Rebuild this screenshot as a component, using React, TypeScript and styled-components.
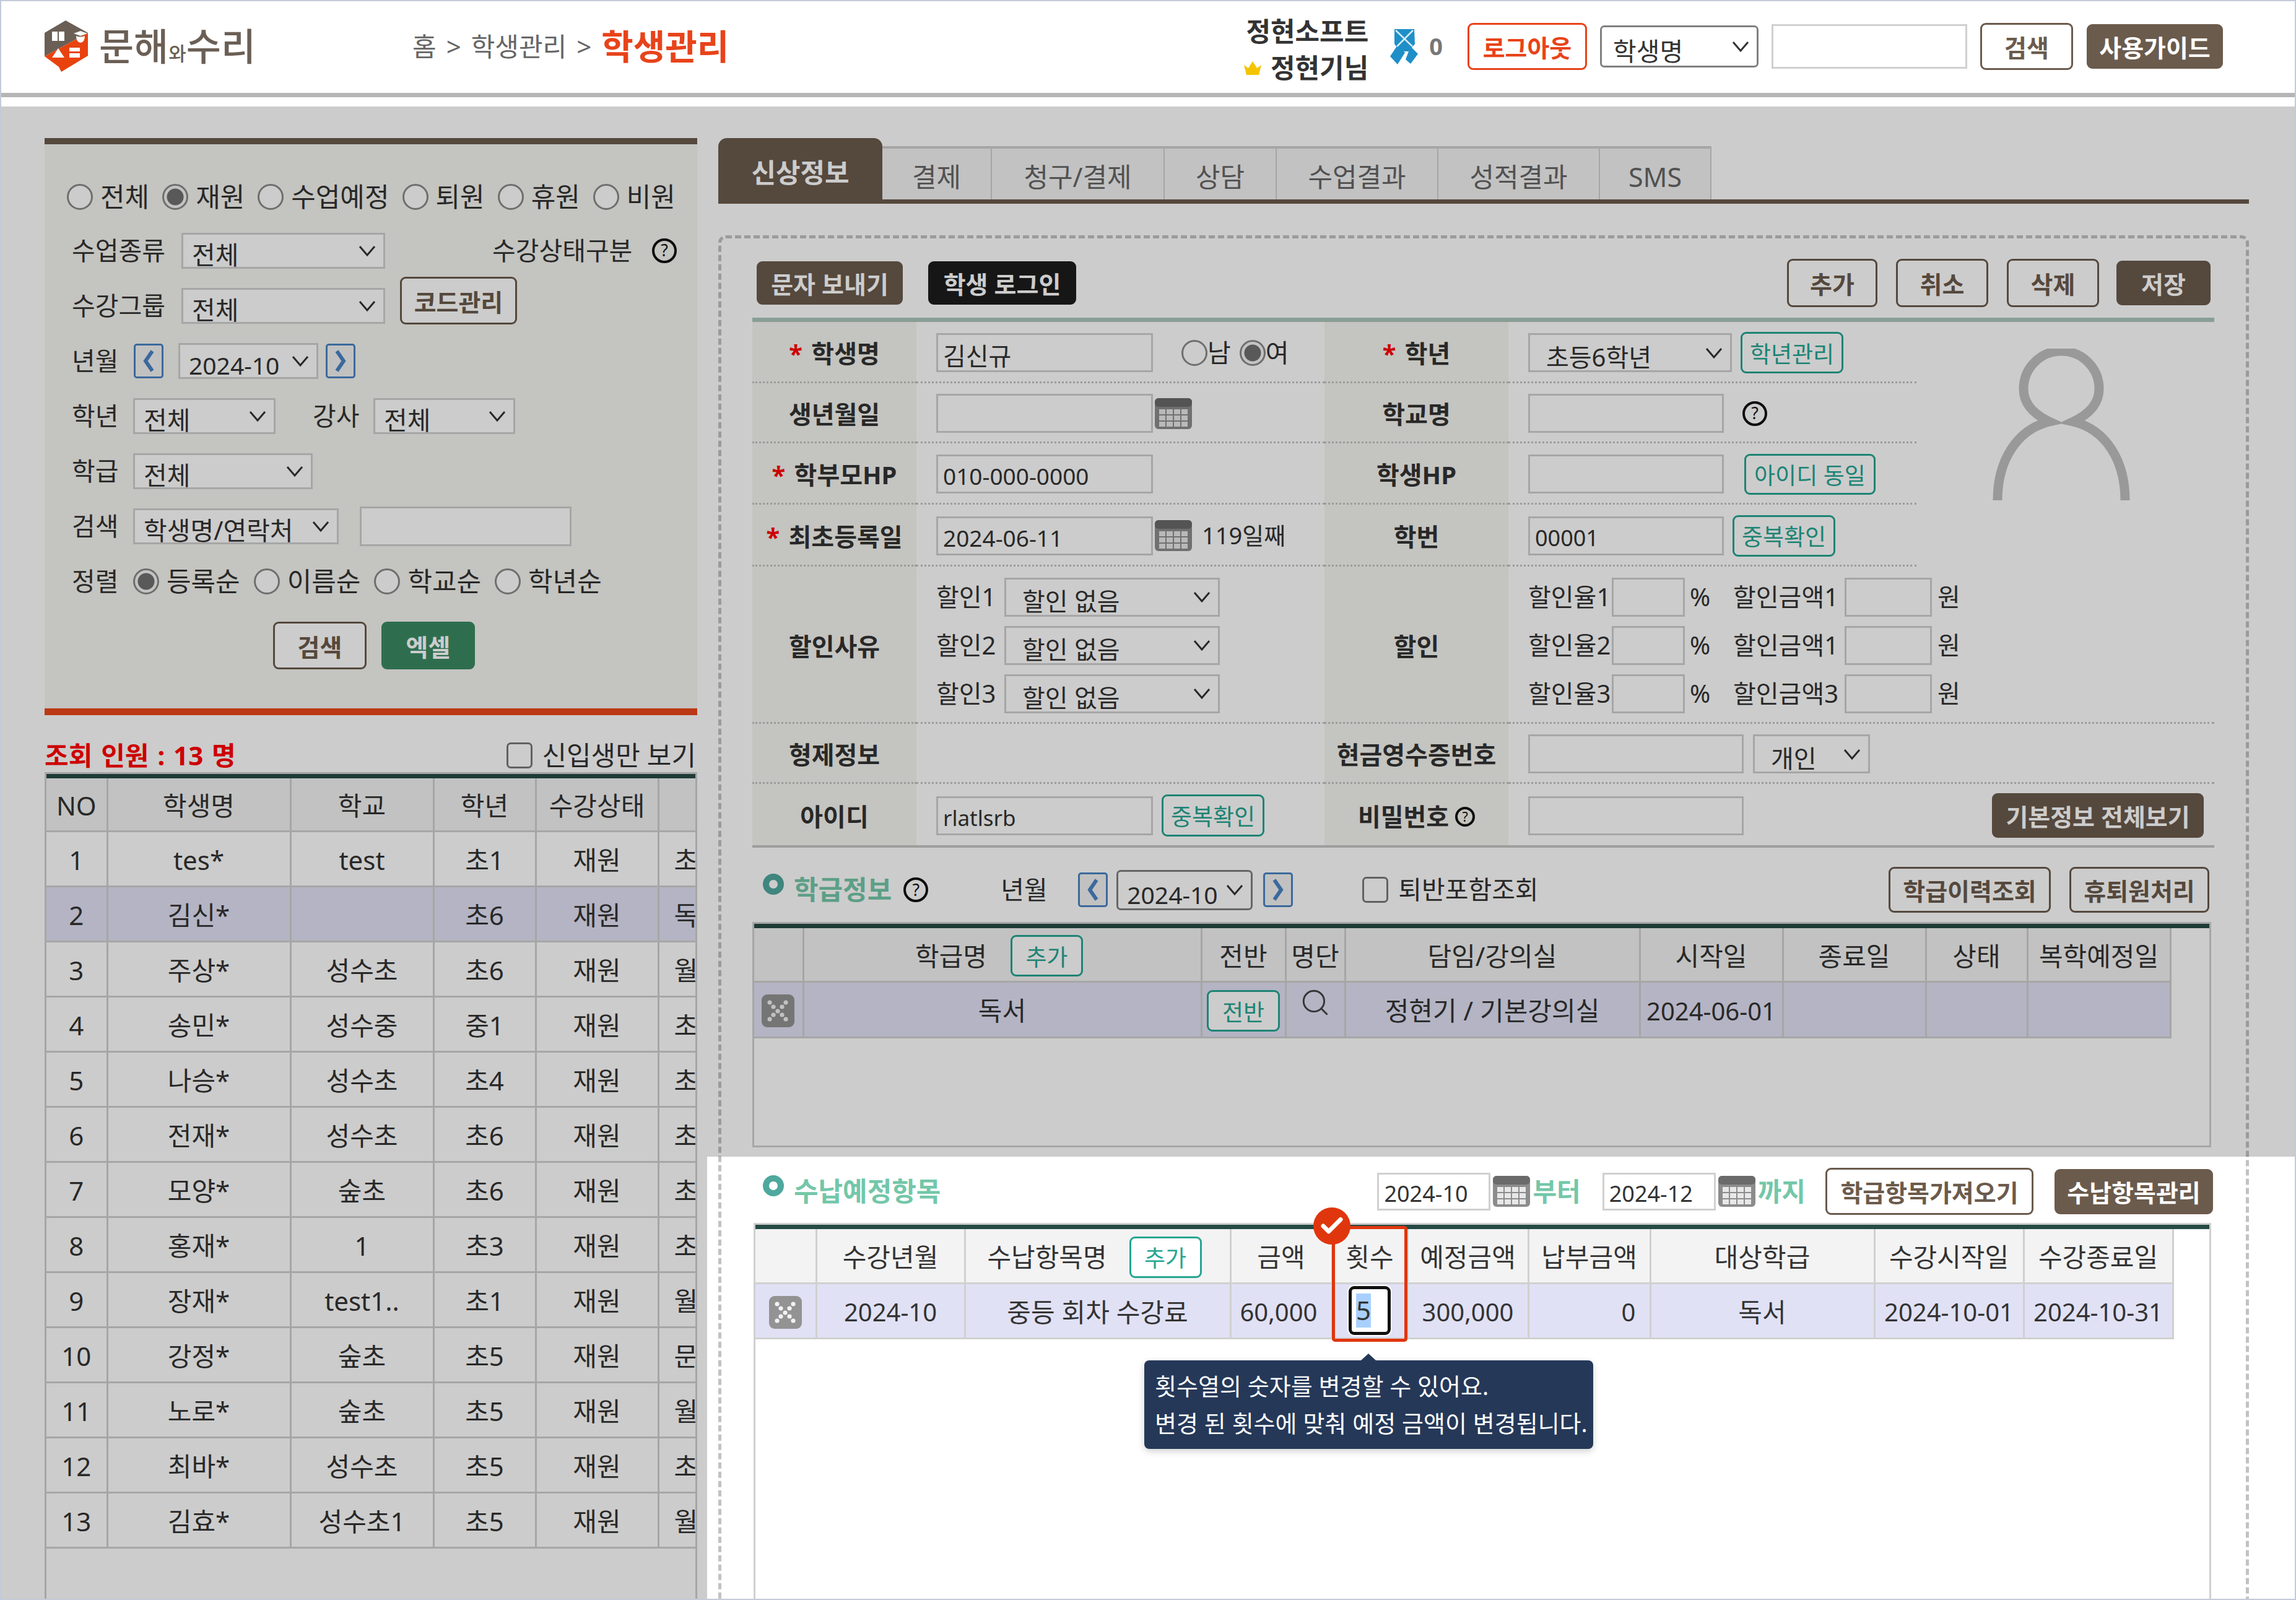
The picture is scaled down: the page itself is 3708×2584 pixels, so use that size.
import { Check, Search } from "lucide-react";
import styled, { createGlobalStyle } from "styled-components";

const GlobalStyle = createGlobalStyle`
  html, body { margin: 0; padding: 0; background: #fff; }
  * { box-sizing: border-box; }
  body {
    font-family: "Noto Sans", "Noto Sans CJK KR", sans-serif;
    font-size: 41px;
    line-height: 1.2;
    color: #333;
  }
`;

const BROWN = "#6b5b4d";
const LINE = "#d0d0d0";
const TEAL = "#26a592";

const Page = styled.div`
  position: relative;
  width: 3708px;
  height: 2584px;
  overflow: hidden;
  background: #fff;
`;

const Frame = styled.div`
  position: absolute;
  inset: 0;
  border: 2px solid #c4cad8;
  z-index: 20;
  pointer-events: none;
`;

/* dimmed layer with the lower right part left open */
const Dimmer = styled.div`
  position: absolute;
  top: 172px;
  left: 0;
  right: 0;
  bottom: 0;
  background: rgba(0, 0, 0, 0.2);
  z-index: 5;
  pointer-events: none;
  clip-path: polygon(0 0, 100% 0, 100% 1696px, 1142px 1696px, 1142px 100%, 0 100%);
`;

/* ---------- header ---------- */
const Header = styled.header`
  height: 157px;
  border-bottom: 7px solid #b5b5b5;
  margin-bottom: 15px;
  padding: 0 118px 0 72px;
  display: flex;
  align-items: center;
`;

const Logo = styled.div`
  width: 594px;
  display: flex;
  align-items: center;
  gap: 18px;
`;

const LogoText = styled.span`
  font-size: 61px;
  font-weight: 500;
  color: #6b5f55;
  white-space: nowrap;
  small { font-size: 31px; }
`;

const Crumb = styled.nav`
  flex: 1;
  display: flex;
  align-items: center;
  gap: 16px;
  color: #666;
  font-size: 42px;
  white-space: nowrap;
  b { font-size: 56px; color: #e8431a; font-weight: 700; }
`;

const UserBox = styled.div`
  padding-top: 10px;
  display: flex;
  flex-direction: column;
  align-items: flex-end;
  gap: 16px;
  font-weight: 700;
  font-size: 43px;
  line-height: 1;
  white-space: nowrap;
  div { display: flex; align-items: center; gap: 14px; }
`;

const Points = styled.span`
  margin-left: 18px;
  margin-right: 40px;
  font-weight: 700;
  color: #777;
  font-size: 38px;
`;

const Btn = styled.button<{ $w: number; $h: number; $look?: "line" | "solid" | "black" | "green" | "teal" | "red"; $ml?: number; $mb?: number }>`
  width: ${(p) => p.$w}px;
  height: ${(p) => p.$h}px;
  margin-left: ${(p) => p.$ml ?? 0}px;
  margin-bottom: ${(p) => p.$mb ?? 0}px;
  flex: none;
  padding: 0;
  font-family: inherit;
  font-size: ${(p) => (p.$look === "teal" ? 37 : 39)}px;
  font-weight: ${(p) => (p.$look === "teal" ? 400 : 700)};
  white-space: nowrap;
  border-radius: 9px;
  border: 3px solid
    ${(p) => ({ solid: BROWN, black: "#1c1c1c", green: "#3a8a62", teal: TEAL, red: "#e8431a", line: BROWN }[p.$look ?? "line"])};
  background: ${(p) => ({ solid: BROWN, black: "#1c1c1c", green: "#3a8a62", teal: "#fff", red: "#fff", line: "#fff" }[p.$look ?? "line"])};
  color: ${(p) => ({ solid: "#fff", black: "#fff", green: "#fff", teal: TEAL, red: "#e8431a", line: BROWN }[p.$look ?? "line"])};
`;

const Field = styled.input<{ $w: number; $h?: number; $ml?: number; $fs?: number }>`
  width: ${(p) => p.$w}px;
  height: ${(p) => p.$h ?? 63}px;
  margin-left: ${(p) => p.$ml ?? 0}px;
  flex: none;
  border: 3px solid ${LINE};
  background: #fff;
  font: inherit;
  font-size: ${(p) => p.$fs ?? 40}px;
  color: #333;
  padding: 6px 8px 0;
  outline: none;
`;

const SelectBox = styled.div<{ $w: number; $h?: number; $ml?: number; $dark?: boolean; $pad?: number; $fs?: number }>`
  width: ${(p) => p.$w}px;
  height: ${(p) => p.$h ?? 58}px;
  margin-left: ${(p) => p.$ml ?? 0}px;
  flex: none;
  display: flex;
  align-items: center;
  justify-content: space-between;
  overflow: hidden;
  background: #fff;
  border: 3px solid ${(p) => (p.$dark ? "#808080" : LINE)};
  border-radius: ${(p) => (p.$dark ? 7 : 0)}px;
  padding: 0 12px 0 ${(p) => p.$pad ?? 14}px;
  font-size: ${(p) => p.$fs ?? 41}px;
  white-space: nowrap;
  span { padding-top: 14px; line-height: 1; }
`;

const Chevron = () => (
  <svg width="28" height="18" viewBox="0 0 28 18" fill="none" style={{ flex: "none" }}>
    <path d="M2 2 L14 16 L26 2" stroke="#333" strokeWidth="3" />
  </svg>
);

const Select = ({ label, ...rest }: { label: string; $w: number; $h?: number; $ml?: number; $dark?: boolean; $pad?: number; $fs?: number }) => (
  <SelectBox {...rest}>
    <span>{label}</span>
    <Chevron />
  </SelectBox>
);

const HelpIcon = styled.span<{ $ml?: number; $size?: number }>`
  width: ${(p) => p.$size ?? 40}px;
  height: ${(p) => p.$size ?? 40}px;
  margin-left: ${(p) => p.$ml ?? 0}px;
  flex: none;
  display: inline-flex;
  align-items: center;
  justify-content: center;
  border: 4px solid #111;
  border-radius: 50%;
  font-size: ${(p) => ((p.$size ?? 40) * 2) / 3}px;
  font-weight: 400;
  color: #111;
  line-height: 1;
`;

const RadioItem = styled.label`
  display: inline-flex;
  align-items: center;
  gap: 12px;
  font-size: 43px;
  white-space: nowrap;
`;

const RadioDot = styled.span<{ $on?: boolean; $ml?: number }>`
  width: 42px;
  height: 42px;
  margin-left: ${(p) => p.$ml ?? 0}px;
  flex: none;
  border-radius: 50%;
  border: 3px solid #8a8a8a;
  background: ${(p) => (p.$on ? "radial-gradient(circle, #707070 0 13px, #f4f4f4 14px)" : "#fff")};
`;

const Radio = ({ label, on }: { label: string; on?: boolean }) => (
  <RadioItem>
    <RadioDot $on={on} />
    {label}
  </RadioItem>
);

const CheckBox = styled.span<{ $ml?: number }>`
  width: 42px;
  height: 42px;
  margin-left: ${(p) => p.$ml ?? 0}px;
  flex: none;
  border: 3px solid #7a7a7a;
  border-radius: 7px;
  background: #fff;
`;

const NavBtn = styled.button<{ $ml?: number }>`
  width: 48px;
  height: 56px;
  margin-left: ${(p) => p.$ml ?? 0}px;
  flex: none;
  padding: 0;
  display: flex;
  align-items: center;
  justify-content: center;
  background: #f2f2f2;
  border: 3px solid #4a84c4;
  border-radius: 5px;
`;

const Nav = ({ dir, ml }: { dir: "prev" | "next"; ml?: number }) => (
  <NavBtn $ml={ml}>
    <svg width="24" height="38" viewBox="0 0 24 38" fill="none">
      <path d={dir === "prev" ? "M18 3 L7 19 L18 35" : "M6 3 L17 19 L6 35"} stroke="#4a84c4" strokeWidth="6" />
    </svg>
  </NavBtn>
);

const Calendar = ({ ml = 3 }: { ml?: number }) => (
  <svg width="60" height="50" viewBox="0 0 60 50" style={{ marginLeft: ml, flex: "none" }}>
    <rect width="60" height="50" rx="6" fill="#8c8c8c" />
    <rect width="60" height="14" rx="6" fill="#6a6a6a" />
    {[0, 1, 2].map((r) =>
      [0, 1, 2, 3].map((c) => <rect key={`${r}${c}`} x={7 + c * 12} y={18 + r * 10} width="10" height="8" fill="#e8e8e8" />),
    )}
  </svg>
);

const XIcon = () => (
  <svg width="53" height="53" viewBox="0 0 53 53">
    <rect width="53" height="53" rx="9" fill="#939393" />
    {[
      [13, 13],
      [19, 20],
      [26, 27],
      [33, 20],
      [39, 13],
      [19, 33],
      [13, 40],
      [33, 33],
      [39, 40],
    ].map(([x, y]) => (
      <circle key={`${x}-${y}`} cx={x} cy={y} r="3.6" fill="#f2f2f2" />
    ))}
  </svg>
);

/* ---------- layout ---------- */
const Body = styled.main`
  display: grid;
  grid-template-columns: 1054px 2472px;
  column-gap: 34px;
  padding: 51px 0 0 72px;
`;

const Side = styled.aside`
  display: flex;
  flex-direction: column;
`;

const FilterPanel = styled.section`
  height: 932px;
  background: #f6f5f0;
  border-top: 10px solid ${BROWN};
  border-bottom: 11px solid #ec4819;
  padding: 43px 0 0 36px;
`;

const FilterRow = styled.div<{ $h?: number; $gap?: number; $pl?: number; $mt?: number }>`
  height: ${(p) => p.$h ?? 89}px;
  margin-top: ${(p) => p.$mt ?? 0}px;
  padding-left: ${(p) => p.$pl ?? 8}px;
  display: flex;
  align-items: center;
  gap: ${(p) => p.$gap ?? 0}px;
  white-space: nowrap;
`;

const RowLabel = styled.span<{ $w: number; $ml?: number }>`
  width: ${(p) => p.$w}px;
  margin-left: ${(p) => p.$ml ?? 0}px;
  flex: none;
`;

const CountRow = styled.div`
  height: 92px;
  padding-top: 38px;
  display: flex;
  align-items: center;
  justify-content: space-between;
  white-space: nowrap;
`;

const CountTitle = styled.strong`
  color: #ff0000;
  font-size: 42px;
  word-spacing: 3px;
`;

const NewOnly = styled.label`
  display: flex;
  align-items: center;
  gap: 15px;
  padding-right: 2px;
  font-size: 43px;
`;

const ListBox = styled.div`
  height: 1337px;
  overflow: hidden;
  border: 3px solid ${LINE};
  border-bottom: 0;
  background: #fff;
  &::before { content: ""; display: block; height: 7px; background: #264a44; }
`;

const DataTable = styled.table<{ $w: number }>`
  width: ${(p) => p.$w}px;
  table-layout: fixed;
  border-collapse: collapse;
  font-size: 42px;
  th, td {
    border: 3px solid ${LINE};
    padding: 5px 0 0;
    text-align: center;
    font-weight: 400;
    white-space: nowrap;
    overflow: hidden;
  }
  thead th { border-top: 0; background: #f3f3f3; }
  tr > *:first-child { border-left: 0; }
`;

const Col = styled.col<{ $w: number }>`
  width: ${(p) => p.$w}px;
`;

const HeadRow = styled.tr<{ $h: number }>`
  height: ${(p) => p.$h}px;
`;

const DataRow = styled.tr<{ $h: number; $on?: boolean }>`
  height: ${(p) => p.$h}px;
  td { background: ${(p) => (p.$on ? "#e1e1f5" : "#fff")}; }
`;

const TailCell = styled.td`
  && { text-align: left; padding-left: 24px; }
`;

const NumCell = styled.td`
  font-size: 40px;
`;

const AmountCell = styled.td`
  font-size: 40px;
  && { text-align: right; padding-right: 22px; }
`;

const CellRow = styled.div<{ $gap: number; $pr?: number }>`
  padding-right: ${(p) => p.$pr ?? 0}px;
  display: flex;
  align-items: center;
  justify-content: center;
  gap: ${(p) => p.$gap}px;
`;

const Content = styled.div`
  display: flex;
  flex-direction: column;
`;

const Tabs = styled.nav`
  height: 106px;
  display: flex;
  align-items: flex-end;
  border-bottom: 7px solid ${BROWN};
`;

const Tab = styled.div<{ $w: number; $on?: boolean }>`
  width: ${(p) => p.$w}px;
  height: ${(p) => (p.$on ? 99 : 86)}px;
  padding-top: ${(p) => (p.$on ? 12 : 10)}px;
  display: flex;
  align-items: center;
  justify-content: center;
  white-space: nowrap;
  font-size: 43px;
  font-weight: ${(p) => (p.$on ? 700 : 400)};
  color: ${(p) => (p.$on ? "#fff" : "#666")};
  background: ${(p) => (p.$on ? BROWN : "#f3f3f3")};
  border-radius: ${(p) => (p.$on ? "14px 14px 0 0" : "0")};
  border: ${(p) => (p.$on ? "0" : `2px solid ${LINE}`)};
  border-top-width: ${(p) => (p.$on ? 0 : 4)}px;
  border-bottom: 0;
  border-left-width: 0;
`;

const DashedBox = styled.div`
  margin-top: 51px;
  height: 2300px;
  border: 5px dashed #c2c2c2;
  border-radius: 12px;
  padding: 33px 51px 0 50px;
`;

const ActionBar = styled.div`
  height: 78px;
  margin-bottom: 17px;
  padding: 0 6px 0 7px;
  display: flex;
  align-items: center;
`;

const ActionRight = styled.div`
  margin-left: auto;
  display: flex;
  align-items: center;
`;

const FormGrid = styled.div`
  display: grid;
  grid-template-columns: 265px 659px 297px 659px 481px;
  grid-template-rows: 99px 97px 99px 100px 254px 97px 99px;
  border-top: 7px solid #acc7bc;
  border-bottom: 4px solid #c6c6c6;
`;

const LabelCell = styled.div<{ $end?: boolean }>`
  display: flex;
  align-items: center;
  justify-content: center;
  gap: 10px;
  padding-top: 6px;
  background: #f6f5f0;
  font-size: 40px;
  font-weight: 700;
  white-space: nowrap;
  border-bottom: ${(p) => (p.$end ? "0" : "3px dotted #c2c2c2")};
`;

const Req = styled.i`
  color: #ff0000;
  font-style: normal;
  margin-right: 4px;
`;

const ValueCell = styled.div<{ $span?: number; $end?: boolean }>`
  grid-column: span ${(p) => p.$span ?? 1};
  padding: 3px 16px 0 32px;
  display: flex;
  align-items: center;
  white-space: nowrap;
  border-bottom: ${(p) => (p.$end ? "0" : "3px dotted #c2c2c2")};
`;

const AvatarCell = styled.div`
  grid-column: 5;
  grid-row: 1 / span 4;
  padding: 43px 0 0 123px;
`;

const DayCount = styled.span`
  margin-left: 16px;
  font-size: 38px;
`;

const DiscountList = styled.div`
  display: flex;
  flex-direction: column;
  gap: 15px;
`;

const DiscountRow = styled.div`
  height: 63px;
  display: flex;
  align-items: center;
  font-size: 40px;
`;

const SectionBar = styled.div<{ $h: number; $pt: number; $pr: number }>`
  height: ${(p) => p.$h}px;
  padding: ${(p) => p.$pt}px ${(p) => p.$pr}px 0 17px;
  display: flex;
  align-items: center;
  white-space: nowrap;
`;

const Bullet = styled.span`
  width: 34px;
  height: 34px;
  margin-bottom: 18px;
  flex: none;
  border: 10px solid #4fa89e;
  border-radius: 50%;
  background: #fff;
`;

const SectionTitle = styled.strong`
  margin-left: 16px;
  font-size: 43px;
  color: #73c7a9;
`;

const GreenWord = styled.strong`
  margin-left: 4px;
  font-size: 42px;
  color: #73c7a9;
`;

const AutoGroup = styled.div`
  margin-left: auto;
  display: flex;
  align-items: center;
`;

const ClassBox = styled.div`
  width: 2356px;
  height: 364px;
  border: 3px solid ${LINE};
  background: #fff;
  &::before { content: ""; display: block; height: 7px; background: #264a44; }
`;

const PayBox = styled.div`
  position: relative;
  margin-left: 2px;
  width: 2354px;
  height: 640px;
  border: 3px solid ${LINE};
  background: #fff;
  &::before { content: ""; display: block; height: 7px; background: #264a44; }
`;

const RedBox = styled.div`
  position: absolute;
  left: 931px;
  top: 2px;
  width: 122px;
  height: 187px;
  border: 5px solid #e0360d;
  border-radius: 5px;
  z-index: 8;
`;

const Badge = styled.div`
  position: absolute;
  left: 901px;
  top: -28px;
  width: 60px;
  height: 60px;
  border-radius: 50%;
  background: #e0360d;
  color: #fff;
  display: flex;
  align-items: center;
  justify-content: center;
  z-index: 9;
`;

const CountField = styled.div`
  width: 68px;
  height: 79px;
  margin: -5px auto 0;
  padding-left: 7px;
  display: flex;
  align-items: center;
  border: 5px solid #111;
  border-radius: 9px;
  background: #fff;
  box-shadow: 0 0 0 2px #fff;
  span { background: #a8d0ff; line-height: 1.3; }
`;

const Hint = styled.div`
  position: absolute;
  left: 628px;
  top: 219px;
  width: 725px;
  height: 143px;
  padding: 11px 0 0 17px;
  background: #253858;
  border-radius: 8px;
  box-shadow: 0 4px 12px rgba(0, 0, 0, 0.18);
  color: #fff;
  font-size: 38px;
  line-height: 60px;
  white-space: nowrap;
  z-index: 9;
  &::before {
    content: "";
    position: absolute;
    left: 350px;
    top: -11px;
    border-left: 12px solid transparent;
    border-right: 12px solid transparent;
    border-bottom: 11px solid #253858;
  }
`;

const students = [
  ["1", "tes*", "test", "초1", "재원", "초"],
  ["2", "김신*", "", "초6", "재원", "독"],
  ["3", "주상*", "성수초", "초6", "재원", "월"],
  ["4", "송민*", "성수중", "중1", "재원", "초"],
  ["5", "나승*", "성수초", "초4", "재원", "초"],
  ["6", "전재*", "성수초", "초6", "재원", "초"],
  ["7", "모양*", "숲초", "초6", "재원", "초"],
  ["8", "홍재*", "1", "초3", "재원", "초"],
  ["9", "장재*", "test1..", "초1", "재원", "월"],
  ["10", "강정*", "숲초", "초5", "재원", "문"],
  ["11", "노로*", "숲초", "초5", "재원", "월"],
  ["12", "최바*", "성수초", "초5", "재원", "초"],
  ["13", "김효*", "성수초1", "초5", "재원", "월"],
];

const tabs: [string, number][] = [
  ["결제", 177],
  ["청구/결제", 279],
  ["상담", 181],
  ["수업결과", 261],
  ["성적결과", 261],
  ["SMS", 180],
];

const LogoMark = () => (
  <svg width="70" height="85" viewBox="0 0 70 85">
    <path d="M34 0 L70 20 L0 58 L0 20 Z" fill="#6b5f55" />
    <path d="M70 20 L70 57 L27 83 L23 75 L0 58 Z" fill="#e8430e" />
    <path d="M12 18 H21 V33 H12 Z M23 18 H32 V33 H23 Z" fill="#fff" />
    <path d="M47 21 L58 17 L69 21 L58 25 Z" fill="#fff" />
    <path d="M51 25 Q58 28 65 25 Q65 35 58 36 Q51 35 51 25 Z" fill="#fff" />
    <path d="M22 45 L32 60 H12 Z" fill="#fff" />
    <path d="M40 44 H57 V50 H40 Z M40 53 H57 V60 H40 Z" fill="#fff" />
  </svg>
);

const Crown = () => (
  <svg width="30" height="22" viewBox="0 0 30 22">
    <path d="M1 6 L8 11 L15 0 L22 11 L29 6 L25 22 H5 Z" fill="#f5c400" />
  </svg>
);

const Ribbon = () => (
  <svg width="45" height="57" viewBox="0 0 45 57" style={{ marginLeft: 35 }}>
    <path d="M7 0 H39 L40 24 L30 36 H16 L7 24 Z" fill="#1f8fc8" />
    <path d="M12 26 L24 38 L12 57 L0 44 Z" fill="#1f8fc8" />
    <path d="M33 28 L45 40 L33 56 L25 49 Z" fill="#1f8fc8" />
    <path d="M9 2 L36 28 M37 2 L11 28" stroke="#d6ecf7" strokeWidth="2.5" />
  </svg>
);

const Avatar = () => (
  <svg width="222" height="245" viewBox="0 0 222 245" fill="none">
    <path
      d="M8 245 C8 180 40 130 92 118 C62 104 50 86 50 65 A61 61 0 0 1 172 65 C172 86 160 104 130 118 C182 130 214 180 214 245"
      stroke="#c0c0c0"
      strokeWidth="15"
    />
  </svg>
);

export default function App() {
  return (
    <Page>
      <GlobalStyle />
      <Header>
        <Logo>
          <LogoMark />
          <LogoText>
            문해<small>와</small>수리
          </LogoText>
        </Logo>
        <Crumb>
          <span>홈</span>
          <span>&gt;</span>
          <span>학생관리</span>
          <span>&gt;</span>
          <b>학생관리</b>
        </Crumb>
        <UserBox>
          <div>정현소프트</div>
          <div>
            <Crown />
            정현기님
          </div>
        </UserBox>
        <Ribbon />
        <Points>0</Points>
        <Btn $w={193} $h={76} $look="red">
          로그아웃
        </Btn>
        <Select label="학생명" $w={256} $h={68} $ml={21} $dark $pad={18} />
        <Field $w={316} $h={72} $ml={21} />
        <Btn $w={150} $h={76} $ml={21}>
          검색
        </Btn>
        <Btn $w={220} $h={72} $ml={22} $look="solid">
          사용가이드
        </Btn>
      </Header>

      <Body>
        <Side>
          <FilterPanel>
            <FilterRow $h={84} $gap={21} $pl={0}>
              <Radio label="전체" />
              <Radio label="재원" on />
              <Radio label="수업예정" />
              <Radio label="퇴원" />
              <Radio label="휴원" />
              <Radio label="비원" />
            </FilterRow>
            <FilterRow>
              <RowLabel $w={177}>수업종류</RowLabel>
              <Select label="전체" $w={329} />
              <RowLabel $w={258} $ml={173}>
                수강상태구분
              </RowLabel>
              <HelpIcon>?</HelpIcon>
            </FilterRow>
            <FilterRow>
              <RowLabel $w={177}>수강그룹</RowLabel>
              <Select label="전체" $w={329} />
              <Btn $w={189} $h={77} $ml={24} $mb={16}>
                코드관리
              </Btn>
            </FilterRow>
            <FilterRow>
              <RowLabel $w={100}>년월</RowLabel>
              <Nav dir="prev" />
              <Select label="2024-10" $w={226} $ml={24} $fs={39} />
              <Nav dir="next" ml={12} />
            </FilterRow>
            <FilterRow>
              <RowLabel $w={99}>학년</RowLabel>
              <Select label="전체" $w={230} />
              <RowLabel $w={98} $ml={60}>
                강사
              </RowLabel>
              <Select label="전체" $w={229} />
            </FilterRow>
            <FilterRow>
              <RowLabel $w={99}>학급</RowLabel>
              <Select label="전체" $w={290} />
            </FilterRow>
            <FilterRow>
              <RowLabel $w={99}>검색</RowLabel>
              <Select label="학생명/연락처" $w={332} />
              <Field $w={342} $h={64} $ml={34} />
            </FilterRow>
            <FilterRow $gap={22}>
              <RowLabel $w={77}>정렬</RowLabel>
              <Radio label="등록순" on />
              <Radio label="이름순" />
              <Radio label="학교순" />
              <Radio label="학년순" />
            </FilterRow>
            <FilterRow $h={77} $mt={21} $pl={333} $gap={24}>
              <Btn $w={151} $h={77}>
                검색
              </Btn>
              <Btn $w={151} $h={77} $look="green">
                엑셀
              </Btn>
            </FilterRow>
          </FilterPanel>

          <CountRow>
            <CountTitle>조회 인원 : 13 명</CountTitle>
            <NewOnly>
              <CheckBox />
              신입생만 보기
            </NewOnly>
          </CountRow>

          <ListBox>
            <DataTable $w={1088}>
              <colgroup>
                <Col $w={98} />
                <Col $w={296} />
                <Col $w={231} />
                <Col $w={165} />
                <Col $w={198} />
                <Col $w={100} />
              </colgroup>
              <thead>
                <HeadRow $h={85}>
                  <th>NO</th>
                  <th>학생명</th>
                  <th>학교</th>
                  <th>학년</th>
                  <th>수강상태</th>
                  <th />
                </HeadRow>
              </thead>
              <tbody>
                {students.map((s) => (
                  <DataRow key={s[0]} $h={89} $on={s[0] === "2"}>
                    <td>{s[0]}</td>
                    <td>{s[1]}</td>
                    <td>{s[2]}</td>
                    <td>{s[3]}</td>
                    <td>{s[4]}</td>
                    <TailCell>{s[5]}</TailCell>
                  </DataRow>
                ))}
              </tbody>
            </DataTable>
          </ListBox>
        </Side>

        <Content>
          <Tabs>
            <Tab $w={265} $on>
              신상정보
            </Tab>
            {tabs.map(([name, w]) => (
              <Tab key={name} $w={w}>
                {name}
              </Tab>
            ))}
          </Tabs>

          <DashedBox>
            <ActionBar>
              <Btn $w={236} $h={70} $look="solid">
                문자 보내기
              </Btn>
              <Btn $w={239} $h={70} $ml={41} $look="black">
                학생 로그인
              </Btn>
              <ActionRight>
                <Btn $w={146} $h={78}>
                  추가
                </Btn>
                <Btn $w={149} $h={78} $ml={30}>
                  취소
                </Btn>
                <Btn $w={149} $h={78} $ml={30}>
                  삭제
                </Btn>
                <Btn $w={152} $h={72} $ml={28} $look="solid">
                  저장
                </Btn>
              </ActionRight>
            </ActionBar>

            <FormGrid>
              <LabelCell>
                <span>
                  <Req>*</Req> 학생명
                </span>
              </LabelCell>
              <ValueCell>
                <Field $w={350} defaultValue="김신규" />
                <RadioDot $ml={46} />
                <span>남</span>
                <RadioDot $on $ml={14} />
                <span>여</span>
              </ValueCell>
              <LabelCell>
                <span>
                  <Req>*</Req> 학년
                </span>
              </LabelCell>
              <ValueCell>
                <Select label="초등6학년" $w={329} $h={63} $pad={26} $fs={40} />
                <Btn $w={166} $h={67} $ml={14} $look="teal">
                  학년관리
                </Btn>
              </ValueCell>
              <AvatarCell>
                <Avatar />
              </AvatarCell>

              <LabelCell>생년월일</LabelCell>
              <ValueCell>
                <Field $w={350} />
                <Calendar />
              </ValueCell>
              <LabelCell>학교명</LabelCell>
              <ValueCell>
                <Field $w={316} />
                <HelpIcon $ml={30}>?</HelpIcon>
              </ValueCell>

              <LabelCell>
                <span>
                  <Req>*</Req> 학부모HP
                </span>
              </LabelCell>
              <ValueCell>
                <Field $w={350} $fs={37} defaultValue="010-000-0000" />
              </ValueCell>
              <LabelCell>학생HP</LabelCell>
              <ValueCell>
                <Field $w={316} />
                <Btn $w={212} $h={66} $ml={33} $look="teal">
                  아이디 동일
                </Btn>
              </ValueCell>

              <LabelCell>
                <span>
                  <Req>*</Req> 최초등록일
                </span>
              </LabelCell>
              <ValueCell>
                <Field $w={350} $fs={37} defaultValue="2024-06-11" />
                <Calendar />
                <DayCount>119일째</DayCount>
              </ValueCell>
              <LabelCell>학번</LabelCell>
              <ValueCell>
                <Field $w={316} $fs={36} defaultValue="00001" />
                <Btn $w={166} $h={67} $ml={14} $look="teal">
                  중복확인
                </Btn>
              </ValueCell>

              <LabelCell>할인사유</LabelCell>
              <ValueCell>
                <DiscountList>
                  {[1, 2, 3].map((n) => (
                    <DiscountRow key={n}>
                      <RowLabel $w={110}>할인{n}</RowLabel>
                      <Select label="할인 없음" $w={348} $h={63} $pad={26} $fs={40} />
                    </DiscountRow>
                  ))}
                </DiscountList>
              </ValueCell>
              <LabelCell>할인</LabelCell>
              <ValueCell $span={2}>
                <DiscountList>
                  {[
                    ["1", "1"],
                    ["2", "1"],
                    ["3", "3"],
                  ].map(([a, b]) => (
                    <DiscountRow key={a}>
                      <RowLabel $w={135}>할인율{a}</RowLabel>
                      <Field $w={118} />
                      <RowLabel $w={70} $ml={8}>
                        %
                      </RowLabel>
                      <RowLabel $w={180}>할인금액{b}</RowLabel>
                      <Field $w={141} />
                      <RowLabel $w={40} $ml={9}>
                        원
                      </RowLabel>
                    </DiscountRow>
                  ))}
                </DiscountList>
              </ValueCell>

              <LabelCell>형제정보</LabelCell>
              <ValueCell />
              <LabelCell>현금영수증번호</LabelCell>
              <ValueCell $span={2}>
                <Field $w={348} />
                <Select label="개인" $w={189} $h={63} $ml={15} $pad={26} $fs={40} />
              </ValueCell>

              <LabelCell $end>아이디</LabelCell>
              <ValueCell $end>
                <Field $w={350} $fs={35} defaultValue="rlatlsrb" />
                <Btn $w={166} $h={68} $ml={14} $look="teal">
                  중복확인
                </Btn>
              </ValueCell>
              <LabelCell $end>
                비밀번호
                <HelpIcon $size={32}>?</HelpIcon>
              </LabelCell>
              <ValueCell $span={2} $end>
                <Field $w={348} />
                <Btn $w={342} $h={72} $ml={401} $look="solid">
                  기본정보 전체보기
                </Btn>
              </ValueCell>
            </FormGrid>

            <SectionBar $h={120} $pt={16} $pr={8}>
              <Bullet />
              <SectionTitle>학급정보</SectionTitle>
              <HelpIcon $ml={19}>?</HelpIcon>
              <RowLabel $w={125} $ml={117}>
                년월
              </RowLabel>
              <Nav dir="prev" />
              <Select label="2024-10" $w={220} $h={65} $ml={14} $dark $fs={39} />
              <Nav dir="next" ml={17} />
              <CheckBox $ml={112} />
              <RowLabel $w={240} $ml={16}>
                퇴반포함조회
              </RowLabel>
              <AutoGroup>
                <Btn $w={262} $h={74}>
                  학급이력조회
                </Btn>
                <Btn $w={226} $h={74} $ml={30}>
                  휴퇴원처리
                </Btn>
              </AutoGroup>
            </SectionBar>

            <ClassBox>
              <DataTable $w={2287}>
                <colgroup>
                  <Col $w={79} />
                  <Col $w={643} />
                  <Col $w={136} />
                  <Col $w={96} />
                  <Col $w={476} />
                  <Col $w={231} />
                  <Col $w={231} />
                  <Col $w={164} />
                  <Col $w={231} />
                </colgroup>
                <thead>
                  <HeadRow $h={86}>
                    <th />
                    <th>
                      <CellRow $gap={38} $pr={10}>
                        학급명
                        <Btn $w={117} $h={67} $look="teal">
                          추가
                        </Btn>
                      </CellRow>
                    </th>
                    <th>전반</th>
                    <th>명단</th>
                    <th>담임/강의실</th>
                    <th>시작일</th>
                    <th>종료일</th>
                    <th>상태</th>
                    <th>복학예정일</th>
                  </HeadRow>
                </thead>
                <tbody>
                  <DataRow $h={90} $on>
                    <td>
                      <CellRow $gap={0}>
                        <XIcon />
                      </CellRow>
                    </td>
                    <td>독서</td>
                    <td>
                      <CellRow $gap={0}>
                        <Btn $w={118} $h={67} $look="teal">
                          전반
                        </Btn>
                      </CellRow>
                    </td>
                    <td>
                      <CellRow $gap={0}>
                        <Search size={50} strokeWidth={1.4} color="#444" style={{ transform: "translateY(-14px)" }} />
                      </CellRow>
                    </td>
                    <td>정현기 / 기본강의실</td>
                    <NumCell>2024-06-01</NumCell>
                    <td />
                    <td />
                    <td />
                  </DataRow>
                </tbody>
              </DataTable>
            </ClassBox>

            <SectionBar $h={122} $pt={20} $pr={2}>
              <Bullet />
              <SectionTitle>수납예정항목</SectionTitle>
              <AutoGroup>
                <Field $w={183} $h={61} $fs={36} defaultValue="2024-10" />
                <Calendar ml={4} />
                <GreenWord>부터</GreenWord>
                <Field $w={183} $h={61} $ml={35} $fs={36} defaultValue="2024-12" />
                <Calendar ml={4} />
                <GreenWord>까지</GreenWord>
                <Btn $w={336} $h={76} $ml={32}>
                  학급항목가져오기
                </Btn>
                <Btn $w={256} $h={73} $ml={34} $look="solid">
                  수납항목관리
                </Btn>
              </AutoGroup>
            </SectionBar>

            <PayBox>
              <DataTable $w={2289}>
                <colgroup>
                  <Col $w={98} />
                  <Col $w={240} />
                  <Col $w={429} />
                  <Col $w={164} />
                  <Col $w={122} />
                  <Col $w={195} />
                  <Col $w={197} />
                  <Col $w={362} />
                  <Col $w={241} />
                  <Col $w={241} />
                </colgroup>
                <thead>
                  <HeadRow $h={87}>
                    <th />
                    <th>수강년월</th>
                    <th>
                      <CellRow $gap={36} $pr={10}>
                        수납항목명
                        <Btn $w={117} $h={67} $look="teal">
                          추가
                        </Btn>
                      </CellRow>
                    </th>
                    <th>금액</th>
                    <th>횟수</th>
                    <th>예정금액</th>
                    <th>납부금액</th>
                    <th>대상학급</th>
                    <th>수강시작일</th>
                    <th>수강종료일</th>
                  </HeadRow>
                </thead>
                <tbody>
                  <DataRow $h={89} $on>
                    <td>
                      <CellRow $gap={0}>
                        <XIcon />
                      </CellRow>
                    </td>
                    <NumCell>2024-10</NumCell>
                    <td>중등 회차 수강료</td>
                    <AmountCell>60,000</AmountCell>
                    <td>
                      <CountField>
                        <span>5</span>
                      </CountField>
                    </td>
                    <AmountCell>300,000</AmountCell>
                    <AmountCell>0</AmountCell>
                    <td>독서</td>
                    <NumCell>2024-10-01</NumCell>
                    <NumCell>2024-10-31</NumCell>
                  </DataRow>
                </tbody>
              </DataTable>
              <RedBox />
              <Badge>
                <Check size={42} strokeWidth={4} />
              </Badge>
              <Hint>
                횟수열의 숫자를 변경할 수 있어요.
                <br />
                변경 된 횟수에 맞춰 예정 금액이 변경됩니다.
              </Hint>
            </PayBox>
          </DashedBox>
        </Content>
      </Body>

      <Dimmer />
      <Frame />
    </Page>
  );
}
